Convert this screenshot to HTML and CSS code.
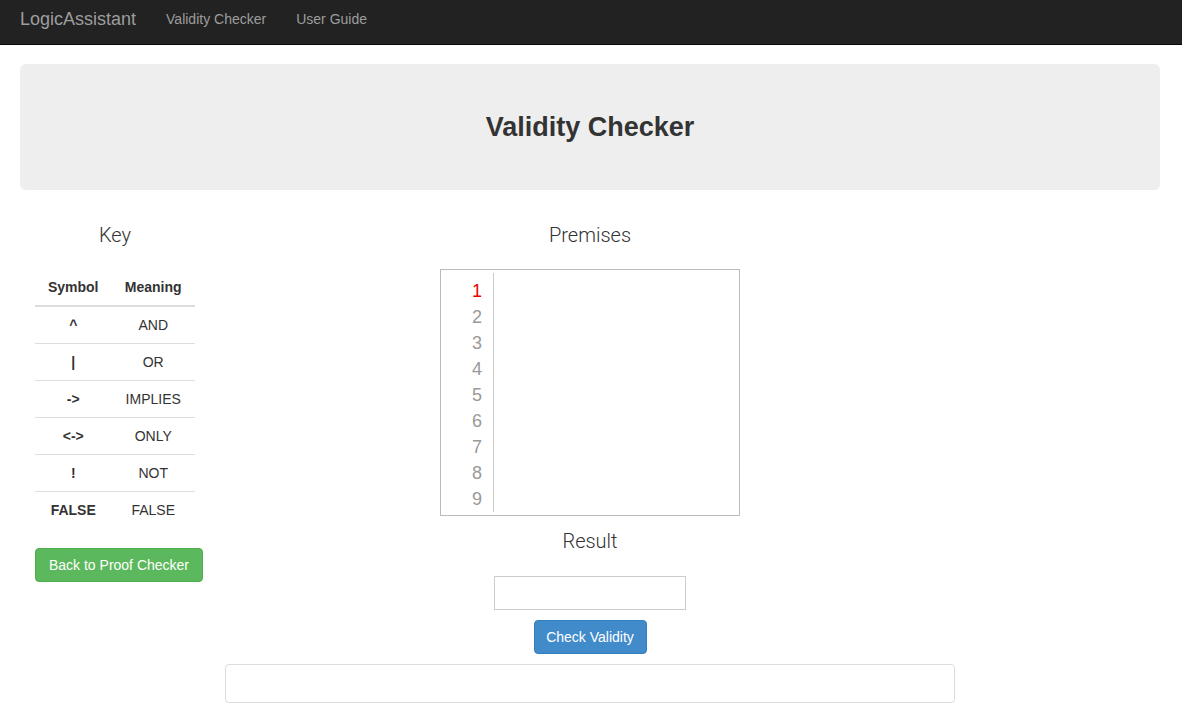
FILE: index.html
```html
<!DOCTYPE html>
<html>
<head>
<meta charset="utf-8">
<link rel="stylesheet" href="styles.css">
</head>
<body>
<nav class="navbar">
  <a class="brand">LogicAssistant</a>
  <a class="nav-link">Validity Checker</a>
  <a class="nav-link">User Guide</a>
</nav>
<div class="container">
  <div class="jumbotron"><h1>Validity Checker</h1></div>
  <div class="row">
    <div class="col-left">
      <h3 class="sub">Key</h3>
      <table class="key">
        <thead><tr><th>Symbol</th><th>Meaning</th></tr></thead>
        <tbody>
          <tr><th>^</th><td>AND</td></tr>
          <tr><th>|</th><td>OR</td></tr>
          <tr><th>-&gt;</th><td>IMPLIES</td></tr>
          <tr><th>&lt;-&gt;</th><td>ONLY</td></tr>
          <tr><th>!</th><td>NOT</td></tr>
          <tr><th>FALSE</th><td>FALSE</td></tr>
        </tbody>
      </table>
      <button class="btn btn-green">Back to Proof Checker</button>
    </div>
    <div class="col-mid">
      <h3 class="sub">Premises</h3>
      <div class="editor">
        <div class="gutter">
          <div class="ln active">1</div>
          <div class="ln">2</div>
          <div class="ln">3</div>
          <div class="ln">4</div>
          <div class="ln">5</div>
          <div class="ln">6</div>
          <div class="ln">7</div>
          <div class="ln">8</div>
          <div class="ln">9</div>
        </div>
        <div class="code"></div>
      </div>
      <h3 class="sub result-h">Result</h3>
      <input class="result" type="text">
      <button class="btn btn-blue">Check Validity</button>
      <div class="panel"></div>
    </div>
    <div class="col-right"></div>
  </div>
</div>
</body>
</html>
```
FILE: styles.css
```css
* { box-sizing: border-box; }
body {
  margin: 0;
  font-family: "Liberation Sans", Arial, sans-serif;
  font-size: 14px;
  line-height: 20px;
  color: #333;
  background: #fff;
}
.navbar {
  height: 45px;
  background: #222;
  border-bottom: 1px solid #080808;
  display: flex;
  align-items: center;
  padding: 0 0 6px 20px;
}
.navbar a { color: #9d9d9d; text-decoration: none; }
.brand { font-size: 18px; margin-right: 15px; }
.nav-link { padding: 0 15px; font-size: 14px; }
.container { padding-left: 20px; width: 1160px; }
.jumbotron {
  margin-top: 19px;
  height: 126px;
  background: #eee;
  border-radius: 6px;
  display: flex;
  align-items: center;
  justify-content: center;
}
.jumbotron h1 {
  margin: 0;
  font-size: 27px;
  font-weight: bold;
  color: #333;
}
.row { display: flex; margin-top: 29px; }
.col-left { width: 190px; padding: 0 15px; }
.col-mid { width: 760px; padding: 0 15px; display: flex; flex-direction: column; align-items: center; }
.col-right { width: 190px; }
.sub {
  font-family: Roboto, "Liberation Sans", sans-serif;
  font-weight: 300;
  font-size: 20px;
  line-height: 22px;
  margin: 5px 0 23px;
  text-align: center;
  color: #333;
}
.key { width: 100%; border-collapse: collapse; }
.key th, .key td {
  padding: 8px;
  text-align: center;
  line-height: 20px;
  font-size: 14px;
}
.key thead th { border-bottom: 2px solid #ddd; font-weight: bold; }
.key tbody tr { border-top: 1px solid #ddd; }
.key tbody tr:first-child { border-top: 0; }
.btn {
  border: 1px solid transparent;
  border-radius: 4px;
  height: 34px;
  padding: 6px 10px;
  font-family: "Liberation Sans", Arial, sans-serif;
  font-size: 14px;
  line-height: 20px;
  color: #fff;
  white-space: nowrap;
}
.btn-green {
  margin-top: 20px;
  width: 168px;
  background: #5cb85c;
  border-color: #4cae4c;
}
.btn-blue {
  margin-top: 10px;
  width: 113px;
  background: #428bca;
  border-color: #357ebd;
}
.col-mid .sub:first-child { margin-bottom: 23px; }
.editor {
  width: 300px;
  height: 247px;
  border: 1px solid #bbb;
  display: flex;
  padding: 3px 0;
}
.gutter {
  width: 53px;
  border-right: 1px solid #ccc;
  padding-top: 5px;
  height: 239px;
}
.ln {
  height: 26px;
  line-height: 26px;
  text-align: right;
  padding-right: 11px;
  font-size: 18px;
  color: #999;
}
.ln.active { color: #e00; }
.code { flex: 1; }
.result-h { margin: 14px 0 24px; }
.result {
  width: 192px;
  height: 34px;
  border: 1px solid #ccc;
  margin: 0;
  padding: 6px 12px;
  font-size: 14px;
}
.panel {
  margin-top: 10px;
  width: 100%;
  height: 39px;
  border: 1px solid #ddd;
  border-radius: 4px;
  box-shadow: 0 1px 1px rgba(0,0,0,.05);
}
```
